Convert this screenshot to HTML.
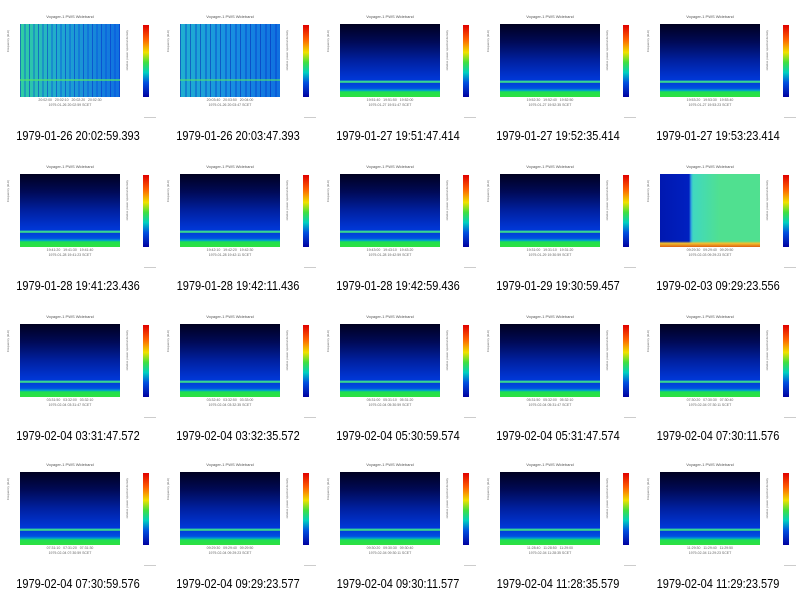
<!DOCTYPE html><html><head><style>
body{margin:0;width:800px;height:596px;background:#fff;position:relative;overflow:hidden;font-family:"Liberation Sans",sans-serif}
.c{position:absolute;width:160px;height:150px}
.t{position:absolute;left:20px;width:100px;top:14px;text-align:center;font-size:4px;color:#555}
.p{position:absolute;left:20px;top:24px;width:100px;height:73px;background:linear-gradient(to bottom,#000020 0%,#000a58 25%,#0020a0 50%,#0030c8 68%,#0038d8 77%,#30d0a0 78%,#40e080 80%,#0040d8 81%,#0050e0 88%,#00a0d0 91%,#20e050 93%,#30e040 100%)}
.p.g{background:repeating-linear-gradient(to right,rgba(0,40,200,.5) 0 1px,rgba(0,0,0,0) 1px 4px,rgba(0,60,220,.3) 4px 6px,rgba(0,0,0,0) 6px 9px),linear-gradient(to right,#30d0a0 0%,#20a8d0 40%,#1070e0 100%)}
.p.g2{background:repeating-linear-gradient(to right,rgba(0,30,180,.5) 0 1px,rgba(0,0,0,0) 1px 5px,rgba(0,50,200,.35) 5px 7px,rgba(0,0,0,0) 7px 10px),linear-gradient(to right,#20b0d0 0%,#1890e0 50%,#1070e0 100%)}
.p.h{background:linear-gradient(to bottom,rgba(0,0,0,0) 92%,#f0c030 95%,#e06010 100%),linear-gradient(to right,#0018b0 0%,#0020c0 29%,#30a0e0 31%,#40d8c0 33%,#50e090 60%,#50e090 100%)}
.ln{position:absolute;left:0;width:100px;top:57px;height:2px;background:#50e070}
.ax{position:absolute;left:20px;top:98px;width:100px;font-size:3.5px;color:#666;text-align:center;line-height:5px}
.yl{position:absolute;left:6px;top:30px;font-size:3px;color:#666;writing-mode:vertical-rl;transform:rotate(180deg)}
.cb{position:absolute;left:143px;top:25px;width:6px;height:72px;background:linear-gradient(to bottom,#e00000,#ff6000 20%,#f0e000 38%,#40e040 52%,#00d0c0 66%,#0050e0 80%,#0000a0 100%)}
.cl{position:absolute;left:125px;top:30px;font-size:3px;color:#666;writing-mode:vertical-rl;transform:rotate(180deg)}
.l{position:absolute;left:0;width:156px;top:129px;text-align:center;font-size:12.5px;line-height:14px;color:#000;transform:scaleX(0.88)}
.s{position:absolute;left:144px;top:117px;width:12px;height:1px;background:#ccc}
</style></head><body>
<div class="c" style="left:0;top:0"><div class="t">Voyager-1 PWS Wideband</div><div class="yl">Frequency (kHz)</div><div class="p g"><div class="ln" style="top:55px;opacity:.7"></div></div><div class="ax">20:02:00 &nbsp; 20:02:10 &nbsp; 20:02:20 &nbsp; 20:02:30<br>1979-01-26 20:02:59 SCET</div><div class="cl">relative power spectral density</div><div class="cb"></div><div class="s"></div><div class="l">1979-01-26 20:02:59.393</div></div>
<div class="c" style="left:160px;top:0"><div class="t">Voyager-1 PWS Wideband</div><div class="yl">Frequency (kHz)</div><div class="p g2"><div class="ln" style="top:55px;opacity:.6"></div></div><div class="ax">20:03:40 &nbsp; 20:03:50 &nbsp; 20:04:00<br>1979-01-26 20:03:47 SCET</div><div class="cl">relative power spectral density</div><div class="cb"></div><div class="s"></div><div class="l">1979-01-26 20:03:47.393</div></div>
<div class="c" style="left:320px;top:0"><div class="t">Voyager-1 PWS Wideband</div><div class="yl">Frequency (kHz)</div><div class="p"></div><div class="ax">19:51:40 &nbsp; 19:51:50 &nbsp; 19:52:00<br>1979-01-27 19:51:47 SCET</div><div class="cl">relative power spectral density</div><div class="cb"></div><div class="s"></div><div class="l">1979-01-27 19:51:47.414</div></div>
<div class="c" style="left:480px;top:0"><div class="t">Voyager-1 PWS Wideband</div><div class="yl">Frequency (kHz)</div><div class="p"></div><div class="ax">19:52:30 &nbsp; 19:52:40 &nbsp; 19:52:50<br>1979-01-27 19:52:35 SCET</div><div class="cl">relative power spectral density</div><div class="cb"></div><div class="s"></div><div class="l">1979-01-27 19:52:35.414</div></div>
<div class="c" style="left:640px;top:0"><div class="t">Voyager-1 PWS Wideband</div><div class="yl">Frequency (kHz)</div><div class="p"></div><div class="ax">19:53:20 &nbsp; 19:53:30 &nbsp; 19:53:40<br>1979-01-27 19:53:23 SCET</div><div class="cl">relative power spectral density</div><div class="cb"></div><div class="s"></div><div class="l">1979-01-27 19:53:23.414</div></div>

<div class="c" style="left:0;top:150px"><div class="t">Voyager-1 PWS Wideband</div><div class="yl">Frequency (kHz)</div><div class="p"></div><div class="ax">19:41:20 &nbsp; 19:41:30 &nbsp; 19:41:40<br>1979-01-28 19:41:23 SCET</div><div class="cl">relative power spectral density</div><div class="cb"></div><div class="s"></div><div class="l">1979-01-28 19:41:23.436</div></div>
<div class="c" style="left:160px;top:150px"><div class="t">Voyager-1 PWS Wideband</div><div class="yl">Frequency (kHz)</div><div class="p"></div><div class="ax">19:42:10 &nbsp; 19:42:20 &nbsp; 19:42:30<br>1979-01-28 19:42:11 SCET</div><div class="cl">relative power spectral density</div><div class="cb"></div><div class="s"></div><div class="l">1979-01-28 19:42:11.436</div></div>
<div class="c" style="left:320px;top:150px"><div class="t">Voyager-1 PWS Wideband</div><div class="yl">Frequency (kHz)</div><div class="p"></div><div class="ax">19:43:00 &nbsp; 19:43:10 &nbsp; 19:43:20<br>1979-01-28 19:42:59 SCET</div><div class="cl">relative power spectral density</div><div class="cb"></div><div class="s"></div><div class="l">1979-01-28 19:42:59.436</div></div>
<div class="c" style="left:480px;top:150px"><div class="t">Voyager-1 PWS Wideband</div><div class="yl">Frequency (kHz)</div><div class="p"></div><div class="ax">19:31:00 &nbsp; 19:31:10 &nbsp; 19:31:20<br>1979-01-29 19:30:59 SCET</div><div class="cl">relative power spectral density</div><div class="cb"></div><div class="s"></div><div class="l">1979-01-29 19:30:59.457</div></div>
<div class="c" style="left:640px;top:150px"><div class="t">Voyager-1 PWS Wideband</div><div class="yl">Frequency (kHz)</div><div class="p h"></div><div class="ax">09:29:30 &nbsp; 09:29:40 &nbsp; 09:29:50<br>1979-02-03 09:29:23 SCET</div><div class="cl">relative power spectral density</div><div class="cb"></div><div class="s"></div><div class="l">1979-02-03 09:29:23.556</div></div>

<div class="c" style="left:0;top:300px"><div class="t">Voyager-1 PWS Wideband</div><div class="yl">Frequency (kHz)</div><div class="p"></div><div class="ax">03:31:50 &nbsp; 03:32:00 &nbsp; 03:32:10<br>1979-02-04 03:31:47 SCET</div><div class="cl">relative power spectral density</div><div class="cb"></div><div class="s"></div><div class="l">1979-02-04 03:31:47.572</div></div>
<div class="c" style="left:160px;top:300px"><div class="t">Voyager-1 PWS Wideband</div><div class="yl">Frequency (kHz)</div><div class="p"></div><div class="ax">03:32:40 &nbsp; 03:32:50 &nbsp; 03:33:00<br>1979-02-04 03:32:35 SCET</div><div class="cl">relative power spectral density</div><div class="cb"></div><div class="s"></div><div class="l">1979-02-04 03:32:35.572</div></div>
<div class="c" style="left:320px;top:300px"><div class="t">Voyager-1 PWS Wideband</div><div class="yl">Frequency (kHz)</div><div class="p"></div><div class="ax">05:31:00 &nbsp; 05:31:10 &nbsp; 05:31:20<br>1979-02-04 05:30:59 SCET</div><div class="cl">relative power spectral density</div><div class="cb"></div><div class="s"></div><div class="l">1979-02-04 05:30:59.574</div></div>
<div class="c" style="left:480px;top:300px"><div class="t">Voyager-1 PWS Wideband</div><div class="yl">Frequency (kHz)</div><div class="p"></div><div class="ax">05:31:50 &nbsp; 05:32:00 &nbsp; 05:32:10<br>1979-02-04 05:31:47 SCET</div><div class="cl">relative power spectral density</div><div class="cb"></div><div class="s"></div><div class="l">1979-02-04 05:31:47.574</div></div>
<div class="c" style="left:640px;top:300px"><div class="t">Voyager-1 PWS Wideband</div><div class="yl">Frequency (kHz)</div><div class="p"></div><div class="ax">07:30:20 &nbsp; 07:30:30 &nbsp; 07:30:40<br>1979-02-04 07:30:11 SCET</div><div class="cl">relative power spectral density</div><div class="cb"></div><div class="s"></div><div class="l">1979-02-04 07:30:11.576</div></div>

<div class="c" style="left:0;top:448px"><div class="t">Voyager-1 PWS Wideband</div><div class="yl">Frequency (kHz)</div><div class="p"></div><div class="ax">07:31:10 &nbsp; 07:31:20 &nbsp; 07:31:30<br>1979-02-04 07:30:59 SCET</div><div class="cl">relative power spectral density</div><div class="cb"></div><div class="s"></div><div class="l">1979-02-04 07:30:59.576</div></div>
<div class="c" style="left:160px;top:448px"><div class="t">Voyager-1 PWS Wideband</div><div class="yl">Frequency (kHz)</div><div class="p"></div><div class="ax">09:29:30 &nbsp; 09:29:40 &nbsp; 09:29:50<br>1979-02-04 09:29:23 SCET</div><div class="cl">relative power spectral density</div><div class="cb"></div><div class="s"></div><div class="l">1979-02-04 09:29:23.577</div></div>
<div class="c" style="left:320px;top:448px"><div class="t">Voyager-1 PWS Wideband</div><div class="yl">Frequency (kHz)</div><div class="p"></div><div class="ax">09:30:20 &nbsp; 09:30:30 &nbsp; 09:30:40<br>1979-02-04 09:30:11 SCET</div><div class="cl">relative power spectral density</div><div class="cb"></div><div class="s"></div><div class="l">1979-02-04 09:30:11.577</div></div>
<div class="c" style="left:480px;top:448px"><div class="t">Voyager-1 PWS Wideband</div><div class="yl">Frequency (kHz)</div><div class="p"></div><div class="ax">11:28:40 &nbsp; 11:28:50 &nbsp; 11:29:00<br>1979-02-04 11:28:35 SCET</div><div class="cl">relative power spectral density</div><div class="cb"></div><div class="s"></div><div class="l">1979-02-04 11:28:35.579</div></div>
<div class="c" style="left:640px;top:448px"><div class="t">Voyager-1 PWS Wideband</div><div class="yl">Frequency (kHz)</div><div class="p"></div><div class="ax">11:29:30 &nbsp; 11:29:40 &nbsp; 11:29:50<br>1979-02-04 11:29:23 SCET</div><div class="cl">relative power spectral density</div><div class="cb"></div><div class="s"></div><div class="l">1979-02-04 11:29:23.579</div></div>
</body></html>
